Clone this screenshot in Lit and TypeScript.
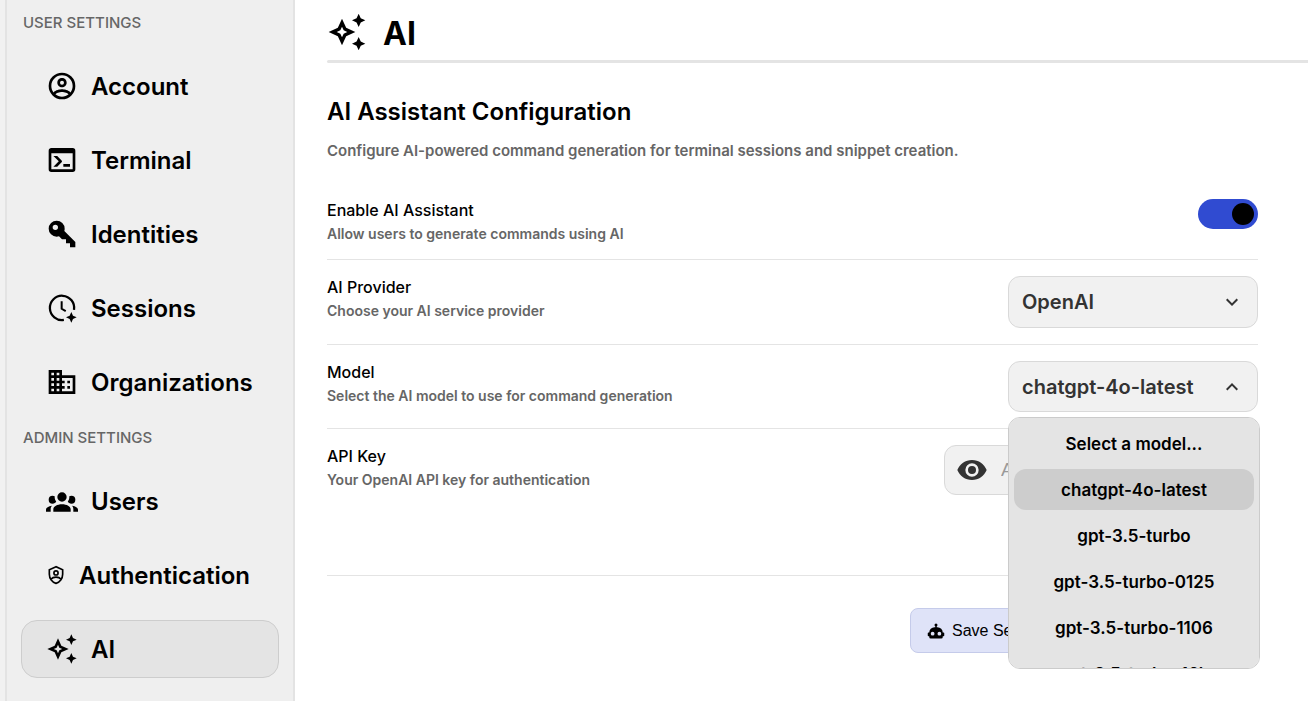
import { LitElement, html, css, svg, nothing } from "lit";
import { customElement, property, state } from "lit/decorators.js";
import { classMap } from "lit/directives/class-map.js";

const ICONS: Record<string, unknown> = {
  account: svg`<path d="M12,2A10,10 0 0,0 2,12A10,10 0 0,0 12,22A10,10 0 0,0 22,12A10,10 0 0,0 12,2M7.07,18.28C7.5,17.38 10.12,16.5 12,16.5C13.88,16.5 16.5,17.38 16.93,18.28C15.57,19.36 13.86,20 12,20C10.14,20 8.43,19.36 7.07,18.28M18.36,16.83C16.93,15.09 13.46,14.5 12,14.5C10.54,14.5 7.07,15.09 5.64,16.83C4.62,15.5 4,13.82 4,12C4,7.59 7.59,4 12,4C16.41,4 20,7.59 20,12C20,13.82 19.38,15.5 18.36,16.83M12,6C10.06,6 8.5,7.56 8.5,9.5C8.5,11.44 10.06,13 12,13C13.94,13 15.5,11.44 15.5,9.5C15.5,7.56 13.94,6 12,6M12,11A1.5,1.5 0 0,1 10.5,9.5A1.5,1.5 0 0,1 12,8A1.5,1.5 0 0,1 13.5,9.5A1.5,1.5 0 0,1 12,11Z"/>`,
  terminal: svg`<path d="M20,19V7H4V19H20M20,3A2,2 0 0,1 22,5V19A2,2 0 0,1 20,21H4A2,2 0 0,1 2,19V5C2,3.89 2.9,3 4,3H20M13,17V15H18V17H13M9.58,13L5.57,9H8.4L11.7,12.3C12.09,12.69 12.09,13.33 11.7,13.72L8.42,17H5.59L9.58,13Z"/>`,
  key: svg`<path d="M22,18V22H18V19H15V16H12L9.74,13.74C9.19,13.91 8.61,14 8,14A6,6 0 0,1 2,8A6,6 0 0,1 8,2A6,6 0 0,1 14,8C14,8.61 13.91,9.19 13.74,9.74L22,18M7,5A2,2 0 0,0 5,7A2,2 0 0,0 7,9A2,2 0 0,0 9,7A2,2 0 0,0 7,5Z"/>`,
  sessions: svg`<path d="M13.4 20.9A9.1 9.1 0 1 1 21 13.4" fill="none" stroke="currentColor" stroke-width="1.7"/><path d="M11.75 7V12.6L14.8 14.4" fill="none" stroke="currentColor" stroke-width="1.5"/><path d="M19 15L20.25 17.75L23 19L20.25 20.26L19 23L17.74 20.26L15 19L17.74 17.75Z"/>`,
  domain: svg`<path d="M18,15H16V17H18M18,11H16V13H18M20,19H12V17H14V15H12V13H14V11H12V9H20M10,7H8V5H10M10,11H8V9H10M10,15H8V13H10M10,19H8V17H10M6,7H4V5H6M6,11H4V9H6M6,15H4V13H6M6,19H4V17H6M12,7V3H2V21H22V7H12Z"/>`,
  users: svg`<path d="M12,5.5A3.5,3.5 0 0,1 15.5,9A3.5,3.5 0 0,1 12,12.5A3.5,3.5 0 0,1 8.5,9A3.5,3.5 0 0,1 12,5.5M5,8C5.56,8 6.08,8.15 6.53,8.42C6.38,9.85 6.8,11.27 7.66,12.38C7.16,13.34 6.16,14 5,14A3,3 0 0,1 2,11A3,3 0 0,1 5,8M19,8A3,3 0 0,1 22,11A3,3 0 0,1 19,14C17.84,14 16.84,13.34 16.34,12.38C17.2,11.27 17.62,9.85 17.47,8.42C17.92,8.15 18.44,8 19,8M5.5,18.25C5.5,16.18 8.41,14.5 12,14.5C15.59,14.5 18.5,16.18 18.5,18.25V20H5.5V18.25M0,20V18.5C0,17.11 1.89,15.94 4.45,15.6C3.86,16.28 3.5,17.22 3.5,18.25V20H0M24,20H20.5V18.25C20.5,17.22 20.14,16.28 19.55,15.6C22.11,15.94 24,17.11 24,18.5V20Z"/>`,
  shield: svg`<g fill="none" stroke="currentColor" stroke-width="2"><path d="M12 2.1L4 5.65V11C4 16 7.4 20.7 12 22C16.6 20.7 20 16 20 11V5.65Z"/><circle cx="12" cy="9.5" r="2.5"/><path d="M6.2 16.8C7.4 15.2 10 14.6 12 14.6S16.6 15.2 17.8 16.8"/></g>`,
  ai: svg`<path d="M9 4L11.5 9.5L17 12L11.5 14.5L9 20L6.5 14.5L1 12L6.5 9.5L9 4M9 8.83L8 11L5.83 12L8 13L9 15.17L10 13L12.17 12L10 11L9 8.83M19 9L17.74 6.26L15 5L17.74 3.75L19 1L20.25 3.75L23 5L20.25 6.26L19 9M19 23L17.74 20.26L15 19L17.74 17.75L19 15L20.25 17.75L23 19L20.25 20.26L19 23Z"/>`,
  eye: svg`<path d="M12,9A3,3 0 0,0 9,12A3,3 0 0,0 12,15A3,3 0 0,0 15,12A3,3 0 0,0 12,9M12,17A5,5 0 0,1 7,12A5,5 0 0,1 12,7A5,5 0 0,1 17,12A5,5 0 0,1 12,17M12,4.5C7,4.5 2.73,7.61 1,12C2.73,16.39 7,19.5 12,19.5C17,19.5 21.27,16.39 23,12C21.27,7.61 17,4.5 12,4.5Z"/>`,
  robot: svg`<path d="M12,2A2,2 0 0,1 14,4C14,4.74 13.6,5.39 13,5.73V7H14A7,7 0 0,1 21,14H22A1,1 0 0,1 23,15V18A1,1 0 0,1 22,19H21V20A2,2 0 0,1 19,22H5A2,2 0 0,1 3,20V19H2A1,1 0 0,1 1,18V15A1,1 0 0,1 2,14H3A7,7 0 0,1 10,7H11V5.73C10.4,5.39 10,4.74 10,4A2,2 0 0,1 12,2M7.5,13A2.5,2.5 0 0,0 5,15.5A2.5,2.5 0 0,0 7.5,18A2.5,2.5 0 0,0 10,15.5A2.5,2.5 0 0,0 7.5,13M16.5,13A2.5,2.5 0 0,0 14,15.5A2.5,2.5 0 0,0 16.5,18A2.5,2.5 0 0,0 19,15.5A2.5,2.5 0 0,0 16.5,13Z"/>`,
  down: svg`<path d="M7.41,8.58L12,13.17L16.59,8.58L18,10L12,16L6,10L7.41,8.58Z"/>`,
  up: svg`<path d="M7.41,15.41L12,10.83L16.59,15.41L18,14L12,8L6,14L7.41,15.41Z"/>`,
};

@customElement("ui-icon")
class UiIcon extends LitElement {
  static styles = css`
    :host { display: inline-flex; flex: none; width: 32px; height: 32px; }
    svg { width: 100%; height: 100%; fill: currentColor; }
  `;
  @property() name = "";
  render() {
    return html`<svg viewBox="0 0 24 24" aria-hidden="true">${ICONS[this.name]}</svg>`;
  }
}

interface NavItem { label: string; icon: string; small?: boolean; active?: boolean; }

const USER_ITEMS: NavItem[] = [
  { label: "Account", icon: "account" },
  { label: "Terminal", icon: "terminal" },
  { label: "Identities", icon: "key" },
  { label: "Sessions", icon: "sessions" },
  { label: "Organizations", icon: "domain" },
];
const ADMIN_ITEMS: NavItem[] = [
  { label: "Users", icon: "users" },
  { label: "Authentication", icon: "shield", small: true },
  { label: "AI", icon: "ai", active: true },
];

@customElement("settings-nav")
class SettingsNav extends LitElement {
  static styles = css`
    :host { display: block; }
    nav { display: flex; flex-direction: column; gap: 16px; padding: 12px 14px; }
    .label { margin: 0; padding: 0 2px 7px; font-size: 15px; font-weight: 500; line-height: 22px; color: #666; }
    .item {
      display: flex; align-items: center; gap: 13px; box-sizing: border-box; height: 58px;
      padding: 0 24px; border: 1px solid transparent; border-radius: 16px;
      color: #000; text-decoration: none; font-size: 24px; font-weight: 600; white-space: nowrap;
    }
    .active { background: #e4e4e4; border-color: #cdcdcd; }
    .small { width: 20px; height: 20px; }
  `;
  private item(i: NavItem) {
    return html`<a class=${classMap({ item: true, active: !!i.active })} href="#" aria-current=${i.active ? "page" : nothing}>
      <ui-icon class=${classMap({ small: !!i.small })} .name=${i.icon}></ui-icon><span>${i.label}</span>
    </a>`;
  }
  render() {
    return html`<nav>
      <p class="label">USER SETTINGS</p>
      ${USER_ITEMS.map((i) => this.item(i))}
      <p class="label">ADMIN SETTINGS</p>
      ${ADMIN_ITEMS.map((i) => this.item(i))}
    </nav>`;
  }
}

const MODELS = ["Select a model...", "chatgpt-4o-latest", "gpt-3.5-turbo", "gpt-3.5-turbo-0125", "gpt-3.5-turbo-1106", "gpt-3.5-turbo-16k"];

@customElement("app-root")
class AppRoot extends LitElement {
  static styles = css`
    :host {
      display: flex; min-height: 100vh; background: #fff; color: #000;
      font-family: Inter, "Noto Sans", sans-serif;
    }
    .rail { flex: none; width: 5px; background: #f1f1f1; }
    .sidebar { flex: none; width: 286px; background: #efefef; border-left: 2px solid #e3e3e3; border-right: 2px solid #e3e3e3; }
    main { flex: 1; min-width: 0; padding: 12px 0 0 32px; }
    .title { display: flex; align-items: center; gap: 16px; height: 40px; padding-bottom: 8px; }
    .title ui-icon { width: 40px; height: 40px; }
    h1 { margin: 0; padding-top: 4px; font-size: 32px; font-weight: 700; line-height: 40px; }
    .rule { height: 3px; border-radius: 2px 0 0 2px; background: #e4e4e4; }
    .content { padding: 32px 50px 0 0; }
    h2 { margin: 0; font-size: 24px; font-weight: 600; line-height: 34px; }
    .intro { margin: 10px 0 20px; font-size: 15px; font-weight: 600; line-height: 24px; color: #666; }
    .row { display: flex; justify-content: space-between; align-items: flex-start; padding: 16px 0; border-bottom: 1px solid #e4e4e4; }
    .row.tall { min-height: 114px; }
    .name { display: block; font-size: 16px; font-weight: 500; line-height: 22px; }
    .hint { margin: 4px 0 0; font-size: 14px; font-weight: 600; line-height: 18px; color: #666; }
    .toggle {
      appearance: none; display: flex; justify-content: flex-end; align-items: center; margin: 0;
      box-sizing: border-box; width: 60px; height: 30px; padding: 4px; border-radius: 15px; background: #999;
    }
    .toggle:checked { background: #304bd1; }
    .toggle::before { content: ""; width: 22px; height: 22px; border-radius: 50%; background: #000; }
    .toggle:not(:checked) { justify-content: flex-start; }
    .picker { position: relative; display: grid; align-items: center; width: 250px; color: #333; }
    .picker select {
      grid-area: 1 / 1; appearance: none; box-sizing: border-box; width: 100%; height: 52px; padding: 0 40px 0 13px;
      border: 1px solid #d9d9d9; border-radius: 12px; background: #f1f1f1; color: #333;
      font: 600 20px Inter, "Noto Sans", sans-serif;
    }
    .picker .open { height: 51px; }
    .picker ui-icon { grid-area: 1 / 1; justify-self: end; margin-right: 14px; width: 24px; height: 24px; pointer-events: none; }
    .menu {
      position: absolute; top: calc(100% + 5px); left: 0; z-index: 2; box-sizing: border-box; width: 252px; height: 252px;
      margin: 0; padding: 5px; display: flex; flex-direction: column; gap: 5px; overflow-y: auto; scrollbar-width: none;
      list-style: none; border: 1px solid #cbcbcb; border-radius: 12px; background: #e4e4e4; color: #000;
    }
    .option { flex: none; padding-top: 2px; border-radius: 12px; text-align: center; font-size: 17px; font-weight: 600; line-height: 39px; cursor: pointer; }
    .option.chosen { background: #cdcdcd; }
    .field {
      display: flex; align-items: center; gap: 13px; box-sizing: border-box; width: 314px; height: 50px;
      padding: 0 11px; border: 1px solid #d9d9d9; border-radius: 12px; background: #f1f1f1;
    }
    .reveal { display: flex; padding: 0; border: 0; background: none; color: #333; }
    .field input { flex: 1; min-width: 0; padding: 0; border: 0; outline: 0; background: none; font: 19px "Liberation Sans", sans-serif; }
    .field input::placeholder { color: #999; }
    .actions { display: flex; justify-content: flex-end; padding-top: 32px; }
    .save {
      display: flex; align-items: center; gap: 7px; box-sizing: border-box; width: 348px; height: 45px; padding: 0 16px;
      border: 1px solid #c5cbea; border-radius: 8px; background: #dfe3f8; color: #000; font: 16px "Liberation Sans", sans-serif;
    }
    .save ui-icon { width: 18px; height: 18px; }
  `;

  @state() private open = true;
  @state() private model = "chatgpt-4o-latest";
  @state() private visible = false;

  private toggleMenu(e: Event) {
    e.preventDefault();
    this.open = !this.open;
  }
  private choose(m: string) {
    this.model = m;
    this.open = false;
  }

  render() {
    return html`
      <div class="rail"></div>
      <aside class="sidebar"><settings-nav></settings-nav></aside>
      <main>
        <header class="title"><ui-icon name="ai"></ui-icon><h1>AI</h1></header>
        <div class="rule"></div>
        <section class="content">
          <h2>AI Assistant Configuration</h2>
          <p class="intro">Configure AI-powered command generation for terminal sessions and snippet creation.</p>

          <div class="row">
            <div>
              <label class="name" for="enable">Enable AI Assistant</label>
              <p class="hint">Allow users to generate commands using AI</p>
            </div>
            <input class="toggle" id="enable" type="checkbox" role="switch" checked />
          </div>

          <div class="row">
            <div>
              <label class="name" for="provider">AI Provider</label>
              <p class="hint">Choose your AI service provider</p>
            </div>
            <div class="picker">
              <select id="provider"><option>OpenAI</option></select>
              <ui-icon name="down"></ui-icon>
            </div>
          </div>

          <div class="row">
            <div>
              <label class="name" for="model">Model</label>
              <p class="hint">Select the AI model to use for command generation</p>
            </div>
            <div class="picker">
              <select id="model" class="open" @mousedown=${this.toggleMenu}>
                ${MODELS.map((m) => html`<option ?selected=${m === this.model}>${m}</option>`)}
              </select>
              <ui-icon .name=${this.open ? "up" : "down"}></ui-icon>
              ${this.open
                ? html`<ul class="menu" role="listbox" aria-label="Model">
                    ${MODELS.map((m) => html`<li class=${classMap({ option: true, chosen: m === this.model })} role="option"
                      aria-selected=${m === this.model} @click=${() => this.choose(m)}>${m}</li>`)}
                  </ul>`
                : nothing}
            </div>
          </div>

          <div class="row tall">
            <div>
              <label class="name" for="key">API Key</label>
              <p class="hint">Your OpenAI API key for authentication</p>
            </div>
            <div class="field">
              <button class="reveal" type="button" aria-label="Show key" @click=${() => (this.visible = !this.visible)}>
                <ui-icon name="eye"></ui-icon>
              </button>
              <input id="key" type=${this.visible ? "text" : "password"} placeholder="API Key" />
            </div>
          </div>

          <div class="actions">
            <button class="save" type="button"><ui-icon name="robot"></ui-icon>Save Settings</button>
          </div>
        </section>
      </main>
    `;
  }
}
